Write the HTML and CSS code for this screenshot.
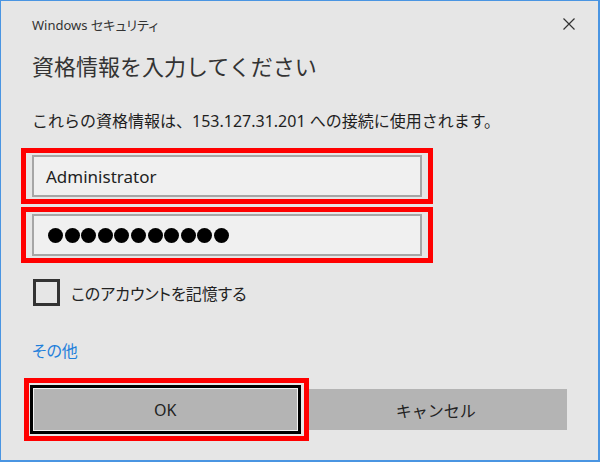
FILE: index.html
```html
<!DOCTYPE html>
<html lang="ja">
  <head>
    <meta charset="UTF-8" />
    <meta name="viewport" content="width=device-width, initial-scale=1.0" />
    <title>Windows セキュリティ</title>
    <link rel="stylesheet" href="styles.css">
  </head>
  <body>
    <div class="dialog">
      <div class="titlebar">
        <span class="title">Windows セキュリティ</span>
        <button class="close" aria-label="閉じる">
          <svg width="12" height="12" viewBox="0 0 12 12">
            <path d="M0.5 0.5 L11.5 11.5 M11.5 0.5 L0.5 11.5" stroke="#333" stroke-width="1.2" fill="none" />
          </svg>
        </button>
      </div>
      <h1 class="heading">資格情報を入力してください</h1>
      <p class="info">これらの資格情報は、153.127.31.201 への接続に使用されます。</p>

      <div class="field marked">
        <div class="input">Administrator</div>
      </div>
      <div class="field marked">
        <div class="input password">
          <span class="dots">
            <i></i><i></i><i></i><i></i><i></i><i></i><i></i><i></i><i></i><i></i><i></i>
          </span>
        </div>
      </div>

      <label class="remember">
        <span class="box"></span>
        このアカウントを記憶する
      </label>

      <a href="#more" class="more">その他</a>

      <div class="buttons">
        <div class="marked ok-mark">
          <button class="btn ok">OK</button>
        </div>
        <button class="btn">キャンセル</button>
      </div>
    </div>
  </body>
</html>
```

FILE: styles.css
```css
body {
  margin: 0;
  padding: 0;
  background: #fff;
  font-family: "Noto Sans", "Noto Sans CJK JP", sans-serif;
  color: #1f1f1f;
}
.dialog {
  box-sizing: border-box;
  width: 600px;
  height: 462px;
  background: #e6e6e6;
  border: 1px solid #4a95e2;
  border-right-width: 2px;
  border-bottom-width: 2px;
  padding: 0 0 0 31px;
}
.titlebar {
  height: 46px;
  display: flex;
  align-items: center;
  justify-content: space-between;
  padding-right: 23px;
}
.title {
  font-size: 13px;
  color: #333;
  font-feature-settings: "palt";
}
.close {
  border: 0;
  background: none;
  padding: 0;
  width: 12px;
  height: 12px;
  display: flex;
}
.heading {
  margin: 4px 0 0;
  font-size: 22px;
  line-height: 30px;
  font-weight: normal;
  color: #333;
}
.info {
  margin: 29px 0 0;
  font-size: 16px;
  line-height: 22px;
}
.field {
  width: 390px;
}
.marked {
  position: relative;
}
.marked::after {
  content: "";
  position: absolute;
  inset: -7px -11px;
  border: 5px solid #ff0000;
  pointer-events: none;
}
.info + .field {
  margin-top: 23px;
}
.field + .field {
  margin-top: 17px;
}
.input {
  box-sizing: border-box;
  height: 42px;
  background: #f0f0f0;
  border: 2px solid #a6a6a6;
  padding: 0 12px;
  display: flex;
  align-items: center;
  font-size: 17px;
  color: #222;
}
.dots {
  display: flex;
  gap: 1.6px;
  margin-left: 2px;
}
.dots i {
  width: 15px;
  height: 15px;
  border-radius: 50%;
  background: #000;
}
.remember {
  margin-top: 23px;
  display: flex;
  align-items: center;
  gap: 11px;
  font-size: 16px;
  font-feature-settings: "palt";
  color: #222;
  height: 27px;
}
.box {
  box-sizing: border-box;
  width: 27px;
  height: 27px;
  border: 3px solid #333;
  margin-left: 1px;
}
.more {
  display: block;
  margin-top: 34px;
  width: max-content;
  font-size: 16px;
  line-height: 22px;
  color: #1f7fdb;
  text-decoration: none;
  font-feature-settings: "palt";
}
.buttons {
  margin: 27px 0 0 2px;
  width: 533px;
  display: grid;
  grid-template-columns: 1fr 1fr;
  gap: 8px;
}
.btn {
  width: 100%;
  height: 41px;
  border: 0;
  background: #b4b4b4;
  font-family: inherit;
  font-size: 16px;
  color: #222;
  display: block;
}
.ok {
  box-shadow: 0 0 0 1px #f2f2f2, 0 0 0 4px #000;
}
.ok-mark::after {
  inset: -11px -12px -11px -10px;
}
```
